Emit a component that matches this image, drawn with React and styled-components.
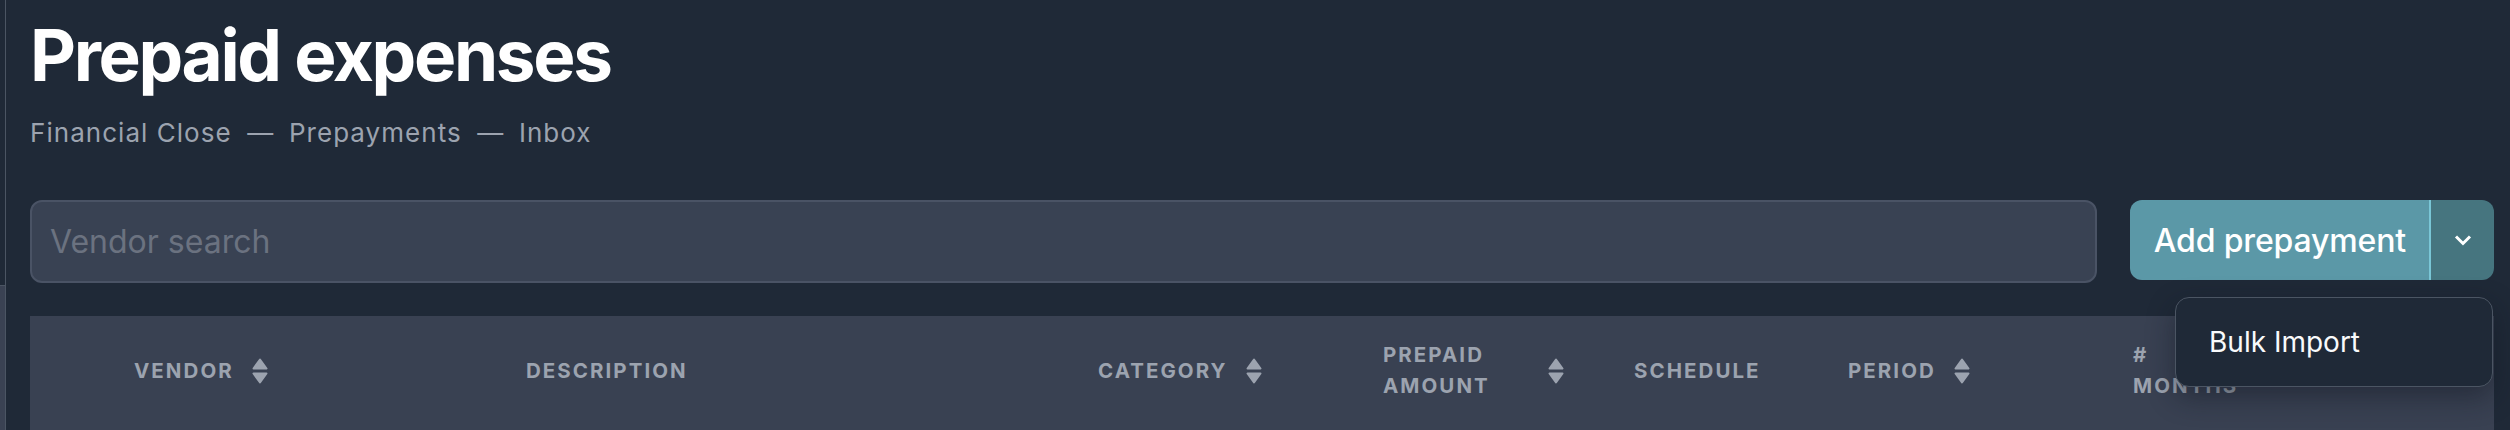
import React from 'react';
import styled, { createGlobalStyle } from 'styled-components';

const GlobalStyle = createGlobalStyle`
    html, body {
        margin: 0;
        padding: 0;
        background: #1f2937;
        font-family: Inter, "Noto Sans", sans-serif;
        overflow: hidden;
    }
    * { box-sizing: border-box; }
`;

const Shell = styled.div`
    display: flex;
    min-height: 430px;
`;

const SideEdge = styled.div`
    width: 6px;
    flex-shrink: 0;
    display: flex;
    flex-direction: column;
    border-right: 1px solid #4b5563;
`;

const EdgeTop = styled.div`
    height: 285px;
`;

const EdgeBottom = styled.div`
    flex: 1;
    background: #3a4253;
    border-top: 1px solid #4b5563;
`;

const Main = styled.main`
    flex: 1;
    min-width: 0;
    padding: 20px 16px 0 24px;
`;

const Title = styled.h1`
    margin: 0;
    font-size: 71px;
    line-height: 1;
    font-weight: 700;
    letter-spacing: -0.033em;
    color: #ffffff;
`;

const Breadcrumbs = styled.nav`
    margin-top: 22px;
    font-size: 26px;
    line-height: 1.5;
    letter-spacing: 0.04em;
    color: #9ca3af;
`;

const Separator = styled.span`
    margin: 0 0.6em;
    letter-spacing: 0;
`;

const Toolbar = styled.div`
    display: flex;
    align-items: flex-start;
    gap: 33px;
    margin-top: 48px;
`;

const SearchInput = styled.input`
    flex: 1;
    height: 83px;
    padding: 0 18px;
    font-family: inherit;
    font-size: 32px;
    color: #f3f4f6;
    background: #394253;
    border: 2px solid #4a5365;
    border-radius: 12px;
    outline: none;

    &::placeholder {
        color: #6b7280;
    }
`;

const SplitButton = styled.div`
    position: relative;
    display: flex;
    height: 80px;
`;

const MainButton = styled.button`
    height: 100%;
    padding: 0 23px 0 24px;
    font-family: inherit;
    font-size: 32px;
    font-weight: 500;
    letter-spacing: -0.005em;
    color: #ffffff;
    background: #5b98a7;
    border: none;
    border-radius: 12px 0 0 12px;
    border-right: 2px solid #7ac6d6;
`;

const ToggleButton = styled.button`
    width: 63px;
    height: 100%;
    display: flex;
    align-items: center;
    justify-content: center;
    padding: 0;
    background: #46757f;
    border: none;
    border-radius: 0 12px 12px 0;
`;

const Menu = styled.div`
    position: absolute;
    top: 97px;
    right: 1px;
    width: 318px;
    height: 90px;
    display: flex;
    align-items: center;
    padding: 0 33px;
    background: #1f2937;
    border: 1.5px solid #4b5563;
    border-radius: 14px;
    box-shadow: 0 10px 28px rgba(15, 20, 30, 0.45);
    z-index: 2;
`;

const MenuItem = styled.span`
    font-size: 28px;
    color: #f9fafb;
`;

const Table = styled.div`
    margin-top: 33px;
    background: #394152;
    height: 140px;
`;

const HeaderRow = styled.div`
    display: grid;
    grid-template-columns: 80px 392px 572px 285px 251px 214px 285px 1fr;
    align-items: center;
    height: 110px;
`;

const HeaderCell = styled.div`
    display: flex;
    align-items: center;
    gap: 18px;
    padding-left: 24px;
    font-size: 20.5px;
    line-height: 1.5;
    font-weight: 700;
    letter-spacing: 0.1em;
    text-transform: uppercase;
    color: #9ca3af;
`;

const Label = styled.span`
    ${p => p.$width && `width: ${p.$width}px;`}
`;

const SortIcon = () => (
    <svg width="16" height="26" viewBox="0 0 16 26" style={{ flexShrink: 0 }}>
        <path d="M8 1.5 L14.5 10.5 L1.5 10.5 Z" fill="#9ca3af" stroke="#9ca3af" strokeWidth="2" strokeLinejoin="round" />
        <path d="M1.5 15.5 L14.5 15.5 L8 24.5 Z" fill="#9ca3af" stroke="#9ca3af" strokeWidth="2" strokeLinejoin="round" />
    </svg>
);

const Chevron = () => (
    <svg width="18" height="12" viewBox="0 0 18 12">
        <polyline points="2,2.5 9,9.5 16,2.5" fill="none" stroke="#ffffff" strokeWidth="3" />
    </svg>
);

const columns = [
    { key: 'check' },
    { key: 'vendor', label: 'Vendor', sort: true },
    { key: 'description', label: 'Description' },
    { key: 'category', label: 'Category', sort: true },
    { key: 'amount', label: 'Prepaid amount', sort: true, width: 147 },
    { key: 'schedule', label: 'Schedule' },
    { key: 'period', label: 'Period', sort: true },
    { key: 'months', label: '# months', width: 110 },
];

const App = () => {
    return (
        <Shell>
            <GlobalStyle />
            <SideEdge>
                <EdgeTop />
                <EdgeBottom />
            </SideEdge>
            <Main>
                <Title>Prepaid expenses</Title>
                <Breadcrumbs>
                    Financial Close<Separator>—</Separator>Prepayments<Separator>—</Separator>Inbox
                </Breadcrumbs>

                <Toolbar>
                    <SearchInput placeholder="Vendor search" />
                    <SplitButton>
                        <MainButton>Add prepayment</MainButton>
                        <ToggleButton><Chevron /></ToggleButton>
                        <Menu>
                            <MenuItem>Bulk Import</MenuItem>
                        </Menu>
                    </SplitButton>
                </Toolbar>

                <Table>
                    <HeaderRow>
                        {columns.map(col => (
                            <HeaderCell key={col.key}>
                                {col.label && <Label $width={col.width}>{col.label}</Label>}
                                {col.sort && <SortIcon />}
                            </HeaderCell>
                        ))}
                    </HeaderRow>
                </Table>
            </Main>
        </Shell>
    );
};

export default App;
